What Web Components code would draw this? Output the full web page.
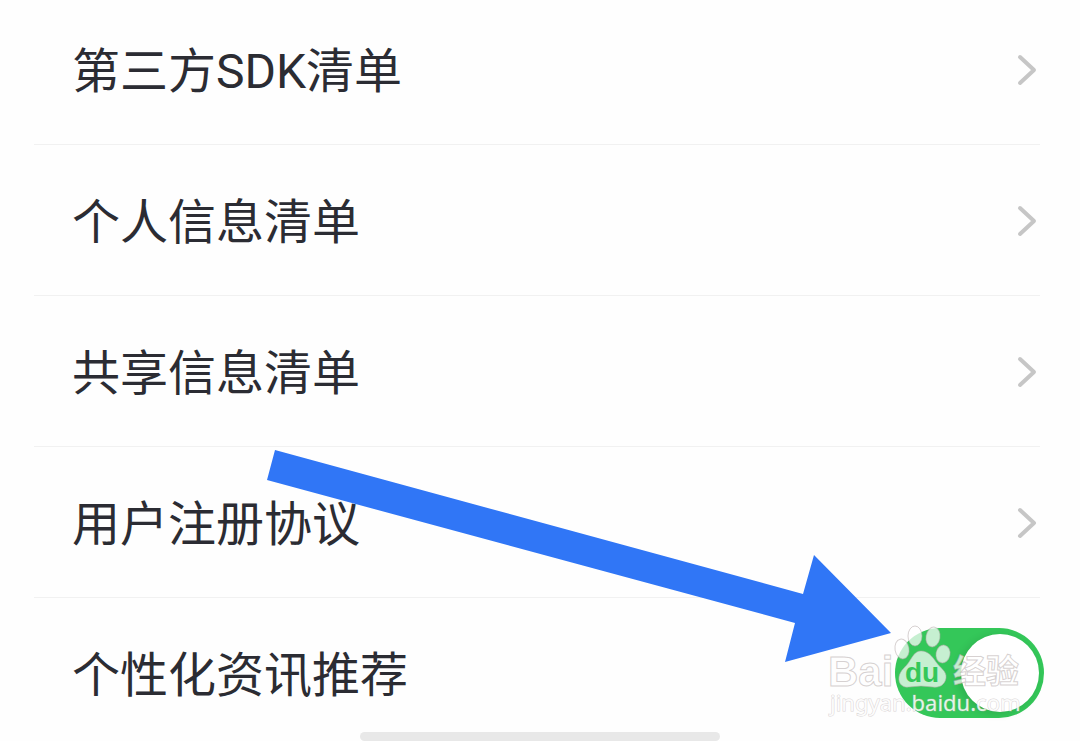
<!DOCTYPE html>
<html lang="zh-CN">
<head>
<meta charset="utf-8">
<meta name="viewport" content="width=device-width, initial-scale=1">
<title>隐私设置</title>
<style>
body { margin: 0; background: #fefefe; color: #2b2c33; font-family: Roboto, "Noto Sans CJK SC", sans-serif; }
</style>
</head>
<body>
<settings-page>
  <settings-row first label="第三方SDK清单"></settings-row>
  <settings-row label="个人信息清单"></settings-row>
  <settings-row label="共享信息清单"></settings-row>
  <settings-row label="用户注册协议"></settings-row>
  <settings-switch label="个性化资讯推荐"></settings-switch>
  <pointer-arrow slot="overlay"></pointer-arrow>
  <brand-watermark slot="overlay"></brand-watermark>
</settings-page>
<script>
const define = (name, html, setup) => customElements.define(name, class extends HTMLElement {
  connectedCallback() {
    if (this.shadowRoot) return;
    const t = document.createElement('template');
    t.innerHTML = html;
    this.attachShadow({ mode: 'open' }).append(t.content.cloneNode(true));
    if (setup) setup(this, this.shadowRoot);
  }
});

define('settings-page', `
<style>
:host { display: flex; flex-direction: column; position: relative; min-height: 100vh; }
main { flex: 1; display: flex; flex-direction: column; }
.home { width: 33.3333%; height: 9px; border-radius: 5px; background: #e8e8e8; align-self: center; }
</style>
<main><slot></slot></main>
<div class="home"></div>
<slot name="overlay"></slot>`);

define('settings-row', `
<style>
:host { display: block; }
a { display: flex; align-items: center; justify-content: space-between; padding: 41px 36px 39px 72px; color: inherit; text-decoration: none; font-size: 48px; line-height: 66px; }
:host([first]) a { padding-top: 35px; }
span { padding-top: 4px; }
svg { width: 34px; height: 34px; fill: none; stroke: #c6c6c6; stroke-width: 4; stroke-linecap: round; stroke-linejoin: round; }
.line { height: 1px; margin: 0 40px 0 34px; background: #f1f1f1; }
</style>
<a href="#"><span></span><svg viewBox="0 0 34 34" aria-hidden="true"><path d="M10 4 24 17 10 30"/></svg></a>
<div class="line"></div>`, (el, root) => {
  root.querySelector('span').textContent = el.getAttribute('label');
});

define('settings-switch', `
<style>
:host { display: block; }
label { display: flex; align-items: center; justify-content: space-between; padding: 30px 36px 14px 72px; font-size: 48px; line-height: 66px; }
span { padding-top: 6px; }
input { appearance: none; margin: 0; width: 149px; height: 90px; border-radius: 45px; background: #c8c8c8; display: flex; align-items: center; padding: 0 5px; box-sizing: border-box; }
input:checked { background: #34c759; justify-content: flex-end; }
input::before { content: ""; width: 78px; height: 78px; border-radius: 50%; background: #fff; box-shadow: -3px 2px 8px rgba(0,0,0,.12); }
</style>
<label><span></span><input type="checkbox" role="switch" checked></label>`, (el, root) => {
  root.querySelector('span').textContent = el.getAttribute('label');
});

define('pointer-arrow', `
<style>
:host { display: block; position: absolute; top: 448px; right: 186px; pointer-events: none; }
svg { display: block; width: 630px; height: 216px; }
</style>
<svg viewBox="264 448 630 216" aria-hidden="true"><path fill="#3076f6" d="M275 450 803 594 814 555 891 633 785 662 795 623 267 480Z"/></svg>`);

define('brand-watermark', `
<style>
:host { display: block; position: absolute; top: 620px; right: 50px; pointer-events: none; }
svg { display: block; width: 210px; height: 105px; }
.mark { fill: #fff; fill-opacity: .72; stroke: #b4aaaa; stroke-opacity: .55; stroke-width: 1; }
.bai { font: bold 42px "Liberation Sans", sans-serif; }
.du { font: bold 28px "Liberation Sans", sans-serif; fill: #34c759; }
.cjk { font: bold 33px "Noto Sans CJK SC", sans-serif; }
.url { font: 22px "Noto Sans", sans-serif; fill: #fff; fill-opacity: .85; stroke: #b4aaaa; stroke-opacity: .5; stroke-width: 1; paint-order: stroke; }
</style>
<svg viewBox="820 620 210 105">
  <text class="mark bai" x="828" y="686">Bai</text>
  <g class="mark">
    <ellipse cx="902" cy="649" rx="7" ry="10" transform="rotate(-10 902 649)"/>
    <ellipse cx="915" cy="636" rx="7" ry="10"/>
    <ellipse cx="933" cy="637" rx="7" ry="10" transform="rotate(10 933 637)"/>
    <ellipse cx="943" cy="654" rx="7" ry="9" transform="rotate(10 943 654)"/>
    <path d="M921 651C928 651 932 656 936 662 940 668 947 671 946 678 945 685 939 688 933 687L921 686 909 687C903 688 898 684 899 677 900 670 906 667 909 662 913 656 915 651 921 651Z"/>
  </g>
  <text class="du" x="905" y="682">du</text>
  <text class="mark cjk" x="953" y="683">经验</text>
  <text class="url" x="830" y="711">jingyan.baidu.com</text>
</svg>`);
</script>
</body>
</html>
